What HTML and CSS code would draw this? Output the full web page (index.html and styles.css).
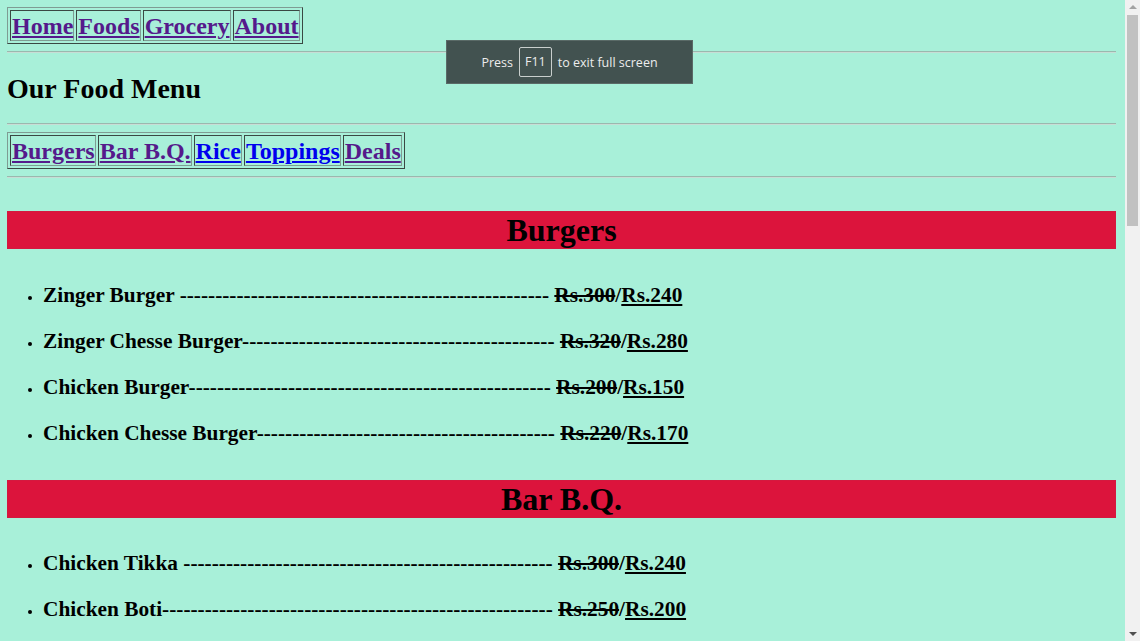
FILE: index.html
```html
<!DOCTYPE html>
<html>
<head>
<meta charset="utf-8">
<title>Our Food Menu</title>
<link rel="stylesheet" href="styles.css">
</head>
<body>
<div class="page">
  <table class="nav">
    <tr>
      <td><a class="visited" href="#">Home</a></td>
      <td><a class="visited" href="#">Foods</a></td>
      <td><a class="visited" href="#">Grocery</a></td>
      <td><a class="visited" href="#">About</a></td>
    </tr>
  </table>
  <hr>
  <h1 class="title">Our Food Menu</h1>
  <hr>
  <table class="nav">
    <tr>
      <td><a class="visited" href="#">Burgers</a></td>
      <td><a class="visited" href="#">Bar B.Q.</a></td>
      <td><a class="fresh" href="#">Rice</a></td>
      <td><a class="fresh" href="#">Toppings</a></td>
      <td><a class="visited" href="#">Deals</a></td>
    </tr>
  </table>
  <hr>

  <section class="menu">
    <h1 class="bar">Burgers</h1>
    <ul class="items">
      <li>Zinger Burger ---------------------------------------------------- <del>Rs.300</del>/<ins>Rs.240</ins></li>
      <li>Zinger Chesse Burger-------------------------------------------- <del>Rs.320</del>/<ins>Rs.280</ins></li>
      <li>Chicken Burger--------------------------------------------------- <del>Rs.200</del>/<ins>Rs.150</ins></li>
      <li>Chicken Chesse Burger------------------------------------------ <del>Rs.220</del>/<ins>Rs.170</ins></li>
    </ul>
  </section>

  <section class="menu">
    <h1 class="bar">Bar B.Q.</h1>
    <ul class="items">
      <li>Chicken Tikka ---------------------------------------------------- <del>Rs.300</del>/<ins>Rs.240</ins></li>
      <li>Chicken Boti------------------------------------------------------- <del>Rs.250</del>/<ins>Rs.200</ins></li>
      <li>Malai Boti-------------------------------------------------------- <del>Rs.280</del>/<ins>Rs.230</ins></li>
      <li>Seekh Kabab------------------------------------------------------ <del>Rs.260</del>/<ins>Rs.210</ins></li>
    </ul>
  </section>
</div>

<div class="fs-toast">
  <span>Press</span>
  <span class="key">F11</span>
  <span>to exit full screen</span>
</div>

<div class="scrollbar">
  <div class="arrow up"></div>
  <div class="thumb"></div>
  <div class="arrow down"></div>
</div>
</body>
</html>
```

FILE: styles.css
```css
html {
  overflow: hidden;
  background: #a8f0d9;
}
body {
  margin: 0;
  background: #a8f0d9;
  font-family: "Liberation Serif", "Times New Roman", serif;
  color: #000;
}
.page {
  width: 1109px;
  padding: 7px 8px 8px 7px;
}
.nav {
  border: 1px outset #7f9c93;
  border-spacing: 2px;
  border-collapse: separate;
}
.nav td {
  border: 1px inset #7f9c93;
  padding: 2px 0 0 1px;
}
.nav a {
  font-size: 24px;
  font-weight: bold;
  line-height: 27px;
}
.visited { color: #551a8b; }
.fresh { color: #0000ee; }

hr {
  border: none;
  border-top: 1px solid #9bb8ae;
  border-bottom: 1px solid #c8ddd5;
  height: 0;
  margin: 7px 0;
}
.title {
  font-size: 28px;
  line-height: 32px;
  margin: 20px 0 18px;
}
.bar {
  background: #dc143c;
  border: 1px solid #d4193f;
  text-align: center;
  font-size: 32px;
  line-height: 36px;
  margin: 33px 0 34px;
}
.menu + .menu .bar {
  margin-top: 34px;
  margin-bottom: 33px;
}
.items {
  margin: 0;
  padding-left: 36px;
  list-style: disc;
}
.items li {
  font-size: 21.33px;
  font-weight: bold;
  line-height: 25px;
  margin: 0 0 21px;
  white-space: nowrap;
}
.items li::marker {
  font-size: 13px;
}
.items li:last-child { margin-bottom: 0; }
del { text-decoration: line-through; }
ins { text-decoration: underline; }

.fs-toast {
  position: absolute;
  left: 446px;
  top: 40px;
  width: 245px;
  height: 42px;
  background: #425250;
  border: 1px solid #5a6a67;
  color: #ececec;
  font-family: "Open Sans", "Noto Sans", sans-serif;
  font-size: 12.5px;
  display: flex;
  align-items: center;
  justify-content: center;
  gap: 6px;
}
.fs-toast .key {
  border: 1px solid #c9cfcd;
  border-radius: 2px;
  padding: 5px 5px;
  line-height: 18px;
}

.scrollbar {
  position: fixed;
  right: 0;
  top: 0;
  width: 15px;
  height: 641px;
  background: #f1f1f1;
}
.thumb {
  position: absolute;
  left: 2px;
  top: 15px;
  width: 11px;
  height: 211px;
  background: #c1c1c1;
}
.arrow {
  position: absolute;
  left: 4px;
  width: 0;
  height: 0;
  border-left: 4px solid transparent;
  border-right: 4px solid transparent;
}
.arrow.up {
  top: 5px;
  border-bottom: 4px solid #a3a3a3;
}
.arrow.down {
  bottom: 5px;
  border-top: 4px solid #505050;
}
```
